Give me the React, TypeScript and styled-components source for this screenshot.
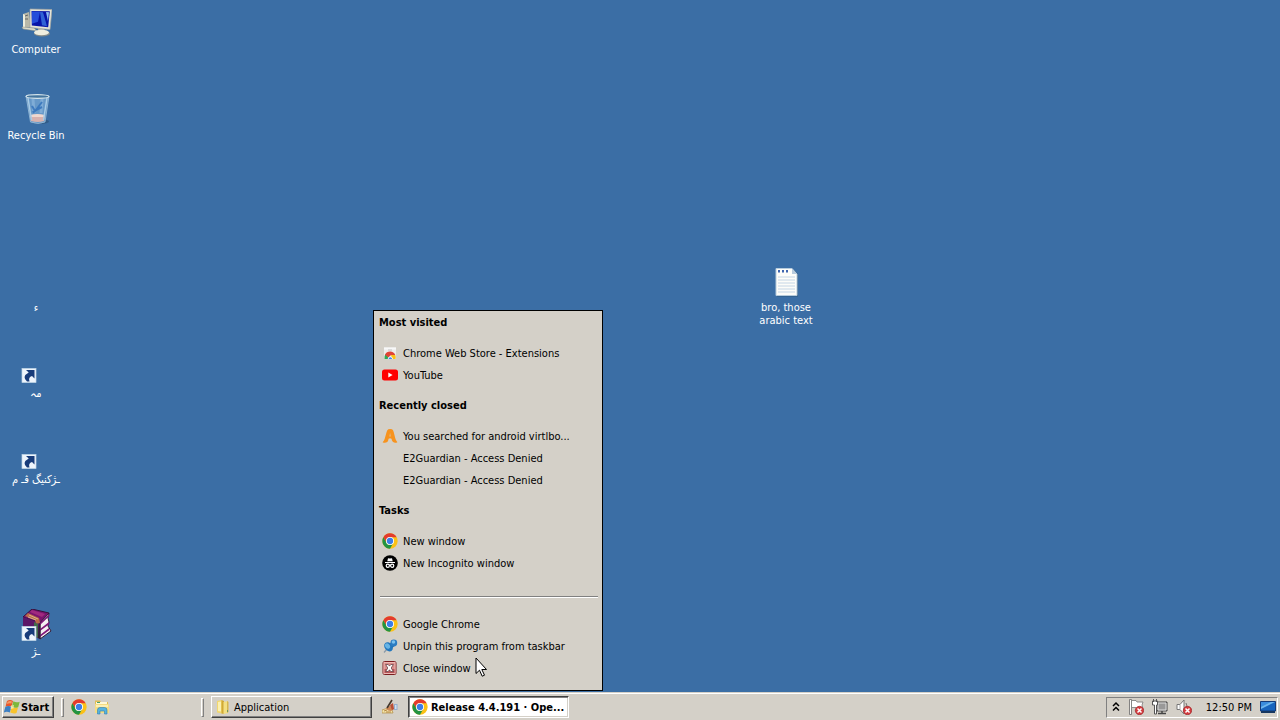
import React from "react";
import styled, { createGlobalStyle, css } from "styled-components";

const GlobalStyle = createGlobalStyle`
  * { box-sizing: border-box; }
  html, body { margin: 0; height: 100%; }
  body {
    font-family: "DejaVu Sans Condensed", "DejaVu Sans", sans-serif;
    font-size: 11px;
    line-height: 13px;
    color: #000;
    overflow: hidden;
  }
  #root { height: 100%; }
  button { font: inherit; color: inherit; margin: 0; }
  svg { display: block; flex: none; }
`;

const Screen = styled.div`
  display: flex;
  flex-direction: column;
  height: 100%;
  background: #3b6ea5;
`;

const Desktop = styled.main`
  position: relative;
  flex: 1;
  min-height: 0;
`;

const IconGrid = styled.div`
  display: grid;
  grid-template-columns: 72px;
  grid-auto-rows: 86px;
  padding-top: 7px;
`;

const ShortcutButton = styled.button<{ $row?: number }>`
  display: flex;
  flex-direction: column;
  align-items: center;
  justify-content: flex-start;
  width: 72px;
  padding: 0 4px;
  gap: 4px;
  border: 0;
  background: transparent;
  color: #fff;
  ${({ $row }) => $row && css`grid-row: ${$row};`}
`;

const ShortcutLabel = styled.span`
  text-align: center;
  white-space: pre-line;
`;

const LooseShortcut = styled.div`
  position: absolute;
  left: 750px;
  top: 265px;
`;

const JumpList = styled.nav`
  position: absolute;
  left: 373px;
  bottom: 1px;
  width: 230px;
  padding-bottom: 11px;
  border: 1px solid #000;
  background: #d4d0c8;
`;

const GroupTitle = styled.h2`
  margin: 0 0 9px;
  padding: 5px 5px 4px;
  font-size: 11px;
  line-height: 13px;
  font-weight: bold;
`;

const Group = styled.section`
  margin-bottom: 8px;
`;

const JumpItem = styled.button`
  display: flex;
  align-items: center;
  gap: 5px;
  width: 100%;
  height: 22px;
  padding: 0 8px;
  border: 0;
  background: transparent;
  text-align: left;
  white-space: nowrap;
`;

const ItemIcon = styled.span`
  width: 16px;
  height: 16px;
  flex: none;
`;

const Rule = styled.hr`
  height: 2px;
  margin: 22px 4px 15px 6px;
  border: 0;
  border-top: 1px solid #808080;
  border-bottom: 1px solid #fff;
`;

const Taskbar = styled.footer`
  display: flex;
  align-items: center;
  height: 28px;
  padding: 1px 2px 0;
  border-top: 1px solid #d4d0c8;
  box-shadow: inset 0 1px 0 #fff;
  background: #d4d0c8;
`;

const raised = css`
  border: 1px solid;
  border-color: #fff #404040 #404040 #fff;
  box-shadow: inset -1px -1px 0 #808080;
`;

const StartButton = styled.button`
  ${raised}
  display: flex;
  align-items: center;
  gap: 0;
  width: 52px;
  height: 22px;
  padding: 0 1px;
  background: #d4d0c8;
  font-weight: bold;
`;

const Grip = styled.span`
  width: 3px;
  height: 19px;
  border: 1px solid;
  border-color: #fff #808080 #808080 #fff;
`;

const QuickLaunch = styled.div`
  display: flex;
  gap: 7px;
  width: 130px;
  margin-left: 7px;
`;

const QuickButton = styled.button`
  width: 16px;
  height: 16px;
  padding: 0;
  border: 0;
  background: transparent;
`;

const StartArea = styled.div`
  display: flex;
  align-items: center;
  gap: 7px;
`;

const Tasks = styled.div`
  display: flex;
  align-items: center;
  flex: 1;
  gap: 10px;
  padding-left: 7px;
`;

const TaskButton = styled.button<{ $active?: boolean }>`
  ${raised}
  display: flex;
  align-items: center;
  gap: 3px;
  width: 161px;
  height: 22px;
  padding: 0 4px 0 3px;
  background: #d4d0c8;
  white-space: nowrap;
  ${({ $active }) =>
    $active &&
    css`
      border-color: #404040 #fff #fff #404040;
      box-shadow: inset 1px 1px 0 #808080, inset -1px -1px 0 #d4d0c8;
      background: #fff;
      font-weight: bold;
    `}
`;

const Tray = styled.div`
  display: flex;
  align-items: center;
  gap: 8px;
  height: 21px;
  padding: 0 1px 0 5px;
  border: 1px solid;
  border-color: #808080 #fff #fff #808080;
`;

const Chevron = styled(QuickButton)`
  width: 8px;
`;

const TrayClock = styled.time`
  margin: 0 0 0 6px;
  white-space: nowrap;
`;

const Pointer = styled.span`
  position: absolute;
  left: 475px;
  top: 657px;
  pointer-events: none;
`;

const ChromeIcon = () => (
  <svg width="16" height="16" viewBox="0 0 48 48" aria-hidden="true">
    <circle cx="24" cy="24" r="23" fill="#fbc116" />
    <path d="M4.1 12.5A23 23 0 0 1 43.9 12.5H24A11.5 11.5 0 0 0 14 29.8Z" fill="#e33b2e" />
    <path d="M4.1 12.5A23 23 0 0 0 24 47L34 29.8A11.5 11.5 0 0 1 14 29.8Z" fill="#229342" />
    <circle cx="24" cy="24" r="12" fill="#fff" />
    <circle cx="24" cy="24" r="9.5" fill="#3b7de8" />
  </svg>
);

const WebStoreIcon = () => (
  <svg width="16" height="16" viewBox="0 0 16 16" aria-hidden="true">
    <path d="M2 2.500h12V14H2z" fill="#ececec" />
    <path d="M2 2.500h12v2H2z" fill="#f8f8f8" />
    <path d="M6 4.500h4v1H6z" fill="#c4c4c4" />
    <path d="M2.500 14Q2 11 3.500 9L7 12.500 6 14z" fill="#31a753" />
    <path d="M3 9.800A5.600 5.600 0 0 1 13.300 10H9L6.500 12.500z" fill="#e04436" />
    <path d="M13.300 10Q14 12 13.500 14H10L9 10z" fill="#fbc116" />
    <path d="M5.800 14a2.500 2.500 0 0 1 5 0z" fill="#fff" />
    <path d="M6.500 14a1.800 1.800 0 0 1 3.600 0z" fill="#4285f4" />
  </svg>
);

const YouTubeIcon = () => (
  <svg width="16" height="16" viewBox="0 0 16 16" aria-hidden="true">
    <rect y="2.500" width="16" height="11" rx="2.500" fill="#f00" />
    <path d="M6.300 5.500v5l4.300-2.500z" fill="#fff" />
  </svg>
);

const AIcon = () => (
  <svg width="16" height="16" viewBox="0 0 16 16" aria-hidden="true">
    <path
      d="M6.300 1.200Q8.200.600 10 1.200Q11.200 1.800 11.700 4L13.200 10Q13.700 12.500 15.400 14.200Q13 15.700 10.800 13.800Q9.800 12.500 9.500 10.700Q8 10 6.600 10.700Q6.200 13 5.300 14Q3 15.500.600 14.300Q2.300 12.500 2.800 10.500L4.600 4Q5.200 1.800 6.300 1.200Z"
      fill="#f7931e"
    />
    <path d="M7.200 8.600L8.100 4.700 9 8.600Q8.100 8.200 7.200 8.600Z" fill="#e3b67c" />
  </svg>
);

const IncognitoIcon = () => (
  <svg width="16" height="16" viewBox="0 0 16 16" aria-hidden="true">
    <circle cx="8" cy="8" r="7.800" fill="#000" />
    <path d="M5.300 6.200l.700-3 1.900.400 2.100-.400.700 3z" fill="#fff" />
    <path d="M3 7h10v1H3z" fill="#fff" />
    <g fill="none" stroke="#fff" strokeWidth="1.200">
      <circle cx="5.800" cy="10.700" r="1.600" />
      <circle cx="10.200" cy="10.700" r="1.600" />
      <path d="M7.200 10.200h1.600" />
    </g>
  </svg>
);

const PinIcon = () => (
  <svg width="16" height="16" viewBox="0 0 16 16" aria-hidden="true">
    <path d="M5 11l-3 3.500" stroke="#8a9aa8" strokeWidth="1.200" />
    <path d="M7 6l4-2 1.500 4-3.500 3z" fill="#1c66a8" />
    <ellipse cx="6.500" cy="8.800" rx="3.900" ry="5" transform="rotate(-40 6.500 8.800)" fill="#2277bd" />
    <ellipse cx="5.500" cy="8" rx="2.200" ry="3" transform="rotate(-40 5.500 8)" fill="#66b4e5" />
    <circle cx="11.800" cy="5" r="3.400" fill="#2b7cc2" />
    <circle cx="11.500" cy="4" r="1.800" fill="#79c1ee" />
  </svg>
);

const CloseIcon = () => (
  <svg width="16" height="16" viewBox="0 0 16 16" aria-hidden="true">
    <rect x="1" y="1.500" width="13" height="13" rx="1.500" fill="#d98c8a" stroke="#7b1c20" />
    <rect x="2" y="2.500" width="11" height="11" fill="none" stroke="#edb9b4" />
    <path d="M2.500 9h10v4h-10z" fill="#b85458" />
    <path d="M3.700 4.500h2.500l1.300 1.600 1.300-1.600h2.500L9.200 8l2.100 3.500H8.800L7.500 9.800l-1.300 1.700H3.700L5.800 8z" fill="#fff" stroke="#56383b" strokeWidth=".7" />
  </svg>
);

const WindowsIcon = () => (
  <svg width="17" height="16" viewBox="0 0 17 16" aria-hidden="true">
    <path d="M3 2q3-2 6 0L7.500 7.600q-3-1.500-6 .2z" fill="#e8562b" />
    <path d="M9.400 2.300q3 1.700 6.300.4l-1.500 5.500q-3 1.300-6.300-.4z" fill="#7db83c" />
    <path d="M1.300 8q3-1.700 6-.1L5.800 13.500q-3-1.500-6 0z" fill="#3c7fc3" />
    <path d="M7.700 8.100q3 1.600 6.300.3l-1.500 5.500q-3 1.200-6.300-.3z" fill="#f8c32c" />
    <path d="M3.500 2.800q2.500-1.300 4.500-.3l-.7 2q-2-.5-4.400.5z" fill="#f59a65" />
    <path d="M7 6.500l3-.5-.500 3.500-3 .500z" fill="#fff4b8" opacity=".7" />
  </svg>
);

const ExplorerIcon = () => (
  <svg width="16" height="16" viewBox="0 0 16 16" aria-hidden="true">
    <path d="M1 3V1.500h5L7 3h7v11H1z" fill="#dfbd55" />
    <path d="M2 3h11v3H2z" fill="#fff8d7" />
    <path d="M3 3h3v1H3z" fill="#48a26d" />
    <path d="M1 5h14v9H1z" fill="#f4dc83" />
    <path d="M2 6h12v2H2z" fill="#fcefb3" />
    <path d="M3.500 15V11q0-2.500 2.500-2.500h4.500Q13 8.500 13 11v4h-2.500v-3H6v3z" fill="#56b3df" stroke="#2f7faf" strokeWidth=".6" />
  </svg>
);

const FolderIcon = () => (
  <svg width="16" height="16" viewBox="0 0 16 16" aria-hidden="true">
    <path d="M2 2l5-1v13.500l-5-1z" fill="#f1d76f" />
    <path d="M6.500 1L9 2v13l-2.500-.5z" fill="#d1a935" />
    <path d="M8.500 3l4.500-1v12l-4.500 1z" fill="#f3df83" />
    <path d="M3 3l3-.6v10L3 12z" fill="#fbf0b2" />
    <path d="M12 2l1.500 1v10L12 14z" fill="#d7b64d" />
    <path d="M12 11h1v2h-1z" fill="#6f965f" />
  </svg>
);

const PaintIcon = () => (
  <svg width="16" height="16" viewBox="0 0 16 16" aria-hidden="true">
    <path d="M0 11l9-3 2 6H0z" fill="#f3e4a8" stroke="#b08a42" strokeWidth=".7" />
    <path d="M2 12l3-1M4 13h5" stroke="#b38646" />
    <path d="M4 10q1-3 4-3l4 3-3 2q-3 0-5-2z" fill="#ce8655" />
    <path d="M10 1L5 9" stroke="#44372b" strokeWidth="1.600" />
    <path d="M8 6l3-2 1 6-2 1z" fill="#b94e37" />
    <path d="M12 5h3.500v6H12z" fill="#95afd0" />
    <path d="M13 6h1.500v4H13z" fill="#d4e1ee" />
  </svg>
);

const ComputerIcon = () => (
  <svg width="32" height="32" viewBox="0 0 32 32" aria-hidden="true">
    <path d="M3 7l6-2 2 15-7 1z" fill="#b8b8a8" />
    <path d="M3 7l2 1v12l-2 1z" fill="#eeeedd" />
    <path d="M5 9l3-1M5 12h3" stroke="#666" />
    <path d="M2 20l12 1 3 3-14-2z" fill="#ddddcc" stroke="#8d9087" strokeWidth=".5" />
    <path d="M17 19l7 1 1 5h-6z" fill="#b1b2a7" />
    <ellipse cx="22" cy="26.500" rx="8" ry="3" fill="#858b88" />
    <ellipse cx="21.500" cy="25.500" rx="7.500" ry="2.800" fill="#efeedf" />
    <path d="M10 2l22 .5-2 20-20-2z" fill="#e5e5d8" stroke="#a2a4a0" strokeWidth=".7" />
    <path d="M11.500 4l18.300.300-1.600 16-16.400-1.800z" fill="#0714a8" />
    <path d="M12 4.500l8 .300-2 10-6 2z" fill="#254dda" />
    <path d="M20 5l3 .2 4 14-5-1z" fill="#3f7ce6" opacity=".75" />
    <path d="M26 5l3 .2-1 9z" fill="#8cb9f1" />
  </svg>
);

const RecycleIcon = () => (
  <svg width="32" height="32" viewBox="0 0 32 32" aria-hidden="true">
    <ellipse cx="20" cy="28.500" rx="9" ry="2.500" fill="#315b87" />
    <path d="M6 3h23l-4 26q-7 3-14.500 0z" fill="#6698c8" stroke="#9dbfd9" strokeWidth=".8" />
    <path d="M10 22h15l-1 6q-6 2-13 0z" fill="#d8b2ae" />
    <path d="M10 22q7-2 15 0l-1 2H11z" fill="#f0d8cf" />
    <path d="M8 5l3.500 22M27 5l-3.500 22" stroke="#a8cbe6" strokeWidth="1.500" />
    <path d="M13 6l1 14M22 6l-1 14" stroke="#8ab5dc" strokeWidth="3" opacity=".7" />
    <ellipse cx="17.500" cy="3.500" rx="11.500" ry="1.800" fill="#44759e" stroke="#d5e4ea" strokeWidth="1.200" />
    <path d="M12 13l3 5 2-2M22 9l-6 8 6-3M14 20l-1-2" fill="none" stroke="#2f6fb9" strokeWidth="2" opacity=".8" />
  </svg>
);

const ShortcutArrow = () => (
  <>
    <rect x="2" y="17.500" width="14" height="14" fill="#eef5fc" stroke="#c2d7e8" strokeWidth=".7" />
    <path d="M6 19h8.500v8.500l-2.500-2.500Q8 26 9.500 30.500H7Q1.500 25.500 8.700 21.500z" fill="#183c7a" />
  </>
);

const BlankShortcutIcon = ({ marked = true }: { marked?: boolean }) => (
  <svg width="32" height="32" viewBox="0 0 32 32" aria-hidden="true">
    {marked && <ShortcutArrow />}
  </svg>
);

const BooksIcon = () => (
  <svg width="32" height="32" viewBox="0 0 32 32" aria-hidden="true">
    <path d="M3 8L12 0l17 4-9 10z" fill="#7b146f" stroke="#36113b" />
    <path d="M3 8l17 6v16L3 23z" fill="#5c1767" />
    <path d="M20 14l9-10-1 5 1 4-1 4 3 5-11 8z" fill="#f4f0f1" stroke="#331934" />
    <path d="M20 14l9-9 .500 2L20 16M20 20l9-7 .500 2-9.500 7M20 26l9-7 .500 2L20 28" fill="#811779" />
    <path d="M19 14l1.500 1v15L18 29z" fill="#2e2034" />
    <path d="M8 4l11 5 1 5-4 1-1-4L5 7z" fill="#bb6b48" />
    <path d="M9 6l9 4M8 8l8 3" stroke="#d8b28b" />
    <path d="M12 1l13 4-3 3-12-5z" fill="#a02a7e" />
    <path d="M14 13l4 2v14l-4-2z" fill="#426b4b" />
    <ShortcutArrow />
  </svg>
);

const NotepadIcon = () => (
  <svg width="32" height="32" viewBox="0 0 32 32" aria-hidden="true">
    <path d="M7 4h16l5 5v22.500H7z" fill="#2e587f" />
    <path d="M6 3.500h16l5 5.500v21.500H6z" fill="#fdfdf9" stroke="#b6cbdc" />
    <path d="M22 3.500l5 5.500h-5z" fill="#b8cbdd" />
    <path d="M8 12h17M8 15h17M8 18h17M8 21h17M8 24h17M8 27h17" stroke="#c4d5e5" />
    <path d="M9 5v2.500M13 5v2.500M17 5v2.500" stroke="#3f66b0" strokeWidth="2" />
  </svg>
);

const ChevronsIcon = () => (
  <svg width="8" height="16" viewBox="0 0 8 16" aria-hidden="true">
    <path d="M1 7L4 4l3 3M1 11.500l3-3 3 3" fill="none" stroke="#000" strokeWidth="1.500" />
  </svg>
);

const ErrorMark = () => (
  <>
    <circle cx="11.500" cy="11.500" r="4.200" fill="#d43a3d" stroke="#9e292c" strokeWidth=".7" />
    <path d="M9.500 9.500l4 4M13.500 9.500l-4 4" stroke="#fff" strokeWidth="1.500" />
  </>
);

const FlagIcon = () => (
  <svg width="16" height="16" viewBox="0 0 16 16" aria-hidden="true">
    <path d="M1.500.500h2v15h-2z" fill="#fff" stroke="#686868" strokeWidth=".8" />
    <path d="M3.500 1.500H8l1 1.500h6l-1 3 1 3.500H9L8 8.500H3.500z" fill="#fff" stroke="#777" strokeWidth=".8" />
    <ErrorMark />
  </svg>
);

const NetworkIcon = () => (
  <svg width="16" height="16" viewBox="0 0 16 16" aria-hidden="true">
    <path d="M5 3h10v9H5z" fill="#999" stroke="#444" />
    <path d="M6 4h8v7H6z" fill="none" stroke="#ddd" />
    <path d="M6 14.500h8M10 12v2" stroke="#444" strokeWidth="1.500" />
    <path d="M.500 2h5v4H4.500v9h-2V6h-2z" fill="#fff" stroke="#555" />
    <path d="M1.500 0v3M4.500 0v3" stroke="#555" />
  </svg>
);

const SpeakerIcon = () => (
  <svg width="16" height="16" viewBox="0 0 16 16" aria-hidden="true">
    <path d="M1 5.500h3l4-4.500v14l-4-4.500H1z" fill="#fff" stroke="#777" />
    <path d="M4 5.500v5" stroke="#aaa" />
    <path d="M10 4q2 3 0 7" fill="none" stroke="#777" />
    <ErrorMark />
  </svg>
);

const ShowDesktopIcon = () => (
  <svg width="16" height="16" viewBox="0 0 16 16" aria-hidden="true">
    <path d="M.500 2.500h15V12H.500z" fill="#1764bd" stroke="#153b79" />
    <path d="M1 3h14L1 10z" fill="#6fb6ed" />
    <path d="M1 3h10L1 8z" fill="#3a8cdd" />
    <path d="M1 12h14v2H1z" fill="#173761" />
  </svg>
);

const PointerIcon = () => (
  <svg width="13" height="21" viewBox="0 0 13 21" aria-hidden="true">
    <path d="M1 1v15.500l3.500-3.300 2.700 6 2.300-1-2.700-5.700h4.700z" fill="#fff" stroke="#000" />
  </svg>
);

const shortcuts = [
  { row: 1, label: "Computer", icon: <ComputerIcon /> },
  { row: 2, label: "Recycle Bin", icon: <RecycleIcon /> },
  { row: 4, label: "ء", icon: <BlankShortcutIcon marked={false} /> },
  { row: 5, label: "مہ", icon: <BlankShortcutIcon /> },
  { row: 6, label: "ـژکنیگ ڤـ م", icon: <BlankShortcutIcon /> },
  { row: 8, label: "ـژ", icon: <BooksIcon /> },
];

const groups = [
  {
    title: "Most visited",
    items: [
      { label: "Chrome Web Store - Extensions", icon: <WebStoreIcon /> },
      { label: "YouTube", icon: <YouTubeIcon /> },
    ],
  },
  {
    title: "Recently closed",
    items: [
      { label: "You searched for android virtlbo...", icon: <AIcon /> },
      { label: "E2Guardian - Access Denied" },
      { label: "E2Guardian - Access Denied" },
    ],
  },
  {
    title: "Tasks",
    items: [
      { label: "New window", icon: <ChromeIcon /> },
      { label: "New Incognito window", icon: <IncognitoIcon /> },
    ],
  },
];

const programItems = [
  { label: "Google Chrome", icon: <ChromeIcon /> },
  { label: "Unpin this program from taskbar", icon: <PinIcon /> },
  { label: "Close window", icon: <CloseIcon /> },
];

type Entry = { label: string; icon?: React.ReactNode };

const JumpEntry = ({ label, icon }: Entry) => (
  <JumpItem type="button">
    <ItemIcon>{icon}</ItemIcon>
    <span>{label}</span>
  </JumpItem>
);

const Shortcut = ({ label, icon, row }: Entry & { row?: number }) => (
  <ShortcutButton type="button" $row={row}>
    {icon}
    <ShortcutLabel>{label}</ShortcutLabel>
  </ShortcutButton>
);

export default function App() {
  return (
    <Screen>
      <GlobalStyle />
      <Desktop>
        <IconGrid>
          {shortcuts.map((s) => (
            <Shortcut key={s.row} {...s} />
          ))}
        </IconGrid>
        <LooseShortcut>
          <Shortcut label={"bro, those\narabic text"} icon={<NotepadIcon />} />
        </LooseShortcut>
        <JumpList aria-label="Google Chrome jump list">
          {groups.map((group) => (
            <Group key={group.title}>
              <GroupTitle>{group.title}</GroupTitle>
              {group.items.map((item, i) => (
                <JumpEntry key={i} {...item} />
              ))}
            </Group>
          ))}
          <Rule />
          {programItems.map((item) => (
            <JumpEntry key={item.label} {...item} />
          ))}
        </JumpList>
        <Pointer>
          <PointerIcon />
        </Pointer>
      </Desktop>
      <Taskbar>
        <StartArea>
          <StartButton type="button">
            <WindowsIcon />
            Start
          </StartButton>
          <Grip />
        </StartArea>
        <QuickLaunch>
          <QuickButton type="button" aria-label="Google Chrome">
            <ChromeIcon />
          </QuickButton>
          <QuickButton type="button" aria-label="Windows Explorer">
            <ExplorerIcon />
          </QuickButton>
        </QuickLaunch>
        <Grip />
        <Tasks>
          <TaskButton type="button">
            <FolderIcon />
            Application
          </TaskButton>
          <QuickButton type="button" aria-label="Paint">
            <PaintIcon />
          </QuickButton>
          <TaskButton type="button" $active>
            <ChromeIcon />
            Release 4.4.191 · Ope...
          </TaskButton>
        </Tasks>
        <Tray>
          <Chevron type="button" aria-label="Show hidden icons">
            <ChevronsIcon />
          </Chevron>
          <QuickButton type="button" aria-label="Action Center">
            <FlagIcon />
          </QuickButton>
          <QuickButton type="button" aria-label="Network">
            <NetworkIcon />
          </QuickButton>
          <QuickButton type="button" aria-label="Volume">
            <SpeakerIcon />
          </QuickButton>
          <TrayClock>12:50 PM</TrayClock>
          <QuickButton type="button" aria-label="Show desktop">
            <ShowDesktopIcon />
          </QuickButton>
        </Tray>
      </Taskbar>
    </Screen>
  );
}
